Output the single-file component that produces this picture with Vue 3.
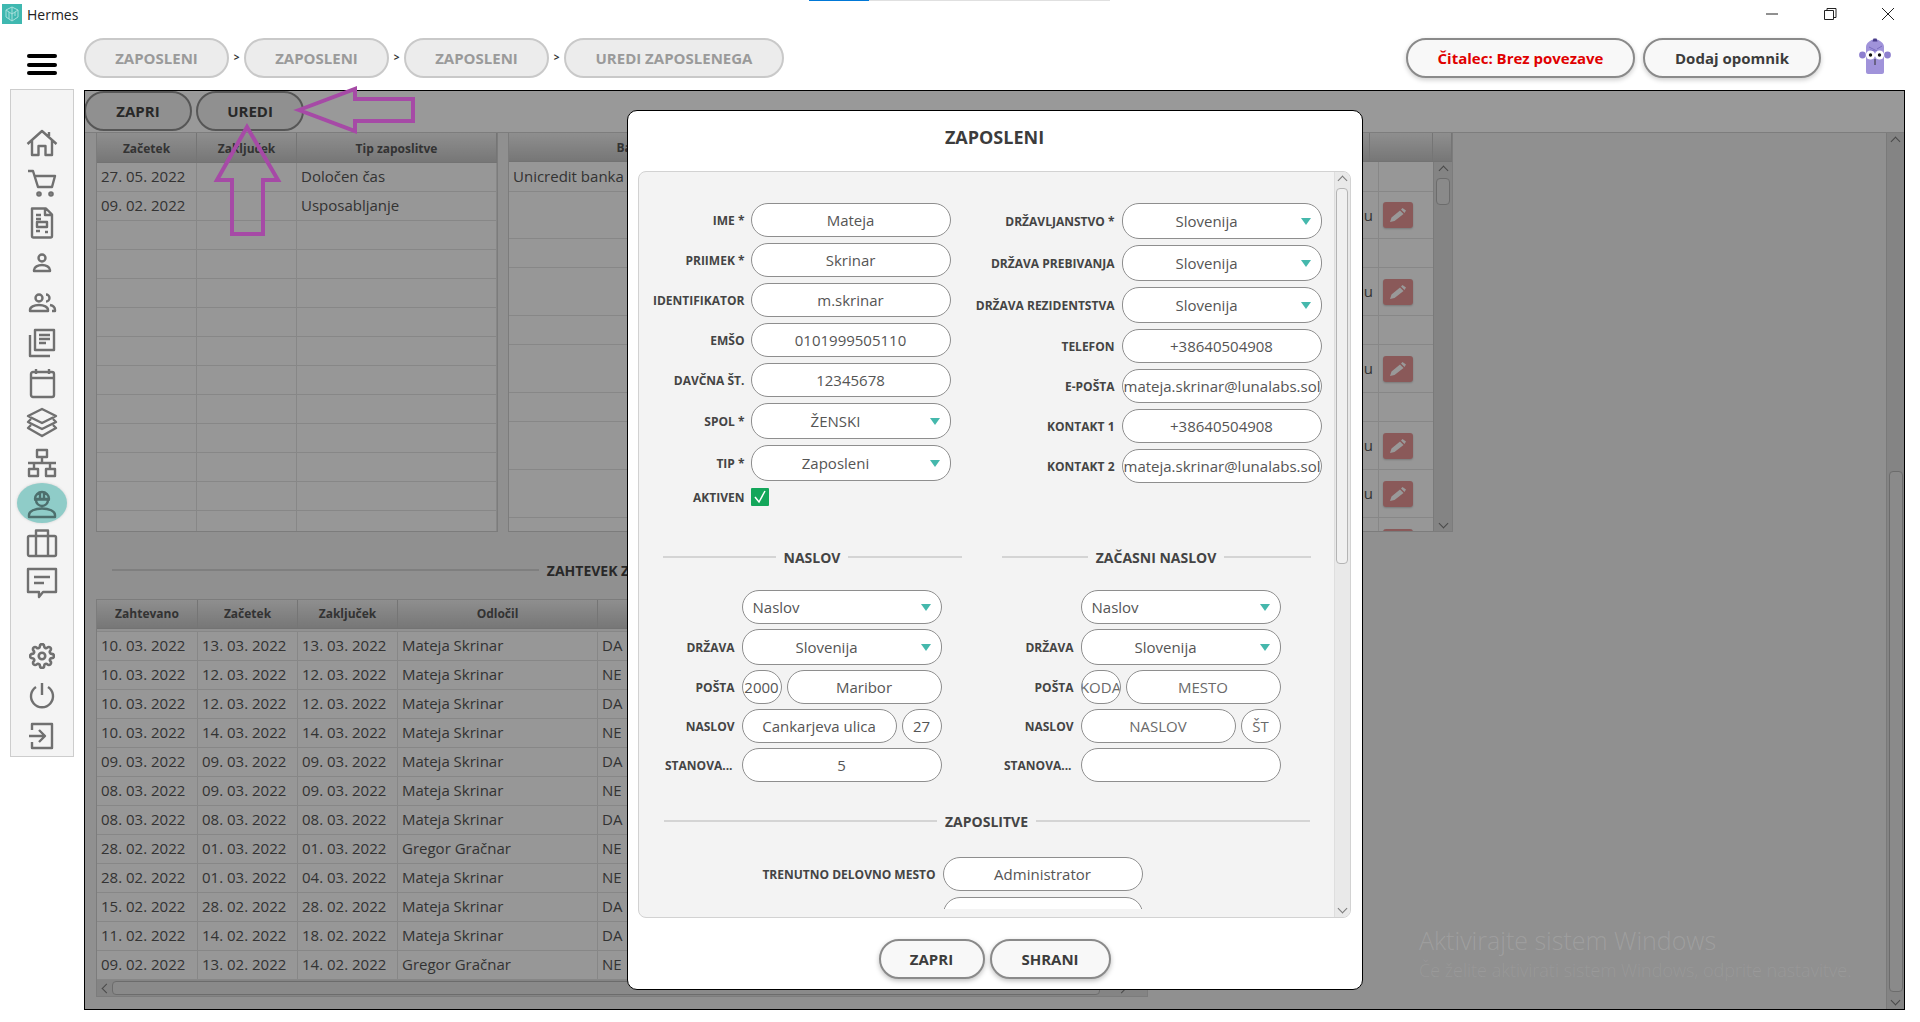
<script setup>
const crumbs = ['ZAPOSLENI', 'ZAPOSLENI', 'ZAPOSLENI', 'UREDI ZAPOSLENEGA']

const contracts = [
  ['27. 05. 2022', '', 'Določen čas'],
  ['09. 02. 2022', '', 'Usposabljanje'],
  ...Array.from({ length: 11 }, () => ['', '', ''])
]

// visina vrstic v desni tabeli, edit = gumb za urejanje
const bankRows = [
  { h: 30, bank: 'Unicredit banka' },
  { h: 47, edit: true },
  { h: 29 },
  { h: 48, edit: true },
  { h: 29 },
  { h: 48, edit: true },
  { h: 29 },
  { h: 48, edit: true },
  { h: 48, edit: true },
  { h: 48, edit: true }
]

const requests = [
  ['10. 03. 2022', '13. 03. 2022', '13. 03. 2022', 'Mateja Skrinar', 'DA'],
  ['10. 03. 2022', '12. 03. 2022', '12. 03. 2022', 'Mateja Skrinar', 'NE'],
  ['10. 03. 2022', '12. 03. 2022', '12. 03. 2022', 'Mateja Skrinar', 'DA'],
  ['10. 03. 2022', '14. 03. 2022', '14. 03. 2022', 'Mateja Skrinar', 'NE'],
  ['09. 03. 2022', '09. 03. 2022', '09. 03. 2022', 'Mateja Skrinar', 'DA'],
  ['08. 03. 2022', '09. 03. 2022', '09. 03. 2022', 'Mateja Skrinar', 'NE'],
  ['08. 03. 2022', '08. 03. 2022', '08. 03. 2022', 'Mateja Skrinar', 'DA'],
  ['28. 02. 2022', '01. 03. 2022', '01. 03. 2022', 'Gregor Gračnar', 'NE'],
  ['28. 02. 2022', '01. 03. 2022', '04. 03. 2022', 'Mateja Skrinar', 'NE'],
  ['15. 02. 2022', '28. 02. 2022', '28. 02. 2022', 'Mateja Skrinar', 'DA'],
  ['11. 02. 2022', '14. 02. 2022', '18. 02. 2022', 'Mateja Skrinar', 'DA'],
  ['09. 02. 2022', '13. 02. 2022', '14. 02. 2022', 'Gregor Gračnar', 'NE']
]

const formLeft = [
  { label: 'IME *', value: 'Mateja' },
  { label: 'PRIIMEK *', value: 'Skrinar' },
  { label: 'IDENTIFIKATOR', value: 'm.skrinar' },
  { label: 'EMŠO', value: '0101999505110' },
  { label: 'DAVČNA ŠT.', value: '12345678' },
  { label: 'SPOL *', value: 'ŽENSKI', select: true },
  { label: 'TIP *', value: 'Zaposleni', select: true }
]

const formRight = [
  { label: 'DRŽAVLJANSTVO *', value: 'Slovenija', select: true },
  { label: 'DRŽAVA PREBIVANJA', value: 'Slovenija', select: true },
  { label: 'DRŽAVA REZIDENTSTVA', value: 'Slovenija', select: true },
  { label: 'TELEFON', value: '+38640504908' },
  { label: 'E-POŠTA', value: 'mateja.skrinar@lunalabs.sol', long: true },
  { label: 'KONTAKT 1', value: '+38640504908' },
  { label: 'KONTAKT 2', value: 'mateja.skrinar@lunalabs.sol', long: true }
]

const addresses = [
  { title: 'NASLOV', code: '2000', city: 'Maribor', street: 'Cankarjeva ulica', no: '27', flat: '5', empty: false },
  { title: 'ZAČASNI NASLOV', code: 'KODA', city: 'MESTO', street: 'NASLOV', no: 'ŠT', flat: '', empty: true }
]
</script>

<template>
  <div class="app">
    <div class="titlebar">
      <div class="progress"><span></span></div>
      <svg class="logo" width="20" height="20" viewBox="0 0 20 20">
        <rect width="20" height="20" fill="#3fb8b0" />
        <path d="M10 3l6 3v7l-6 4-6-4V6zM10 3v14M4 6l6 4 6-4M7 8v7M13 8v4" fill="none" stroke="#a9e0dc" stroke-width="1" />
      </svg>
      <span class="app-name">Hermes</span>
      <div class="win-controls">
        <svg width="14" height="14" viewBox="0 0 14 14"><path d="M1 7h12" stroke="#222" fill="none" /></svg>
        <svg width="14" height="14" viewBox="0 0 14 14"><path d="M1.5 3.5h9v9h-9zM4 3.5V1.5h9v9h-2.5" stroke="#222" fill="none" /></svg>
        <svg width="14" height="14" viewBox="0 0 14 14"><path d="M1 1l12 12M13 1L1 13" stroke="#222" fill="none" /></svg>
      </div>
    </div>

    <div class="topbar">
      <div class="burger-wrap">
        <div class="burger"><i></i><i></i><i></i></div>
      </div>
      <template v-for="(c, i) in crumbs" :key="i">
        <span v-if="i" class="crumb-sep">&gt;</span>
        <div class="crumb" :class="{ wide: i === 3 }">{{ c }}</div>
      </template>
      <div class="top-right">
        <button class="top-btn reader">Čitalec: Brez povezave</button>
        <button class="top-btn reminder">Dodaj opomnik</button>
        <svg class="mascot" width="32" height="40" viewBox="0 0 32 40">
          <circle cx="3.500" cy="19" r="3.400" fill="#8d7fcf" />
          <circle cx="28.500" cy="19" r="3.400" fill="#8d7fcf" />
          <path d="M7 36V11c0-4 4-7 9-8 5 1 9 4 9 8v25c0 1-1 2-2 2H9c-1 0-2-1-2-2z" fill="#a093da" />
          <path d="M13.500 5.500l1-3h3l1 3z" fill="#4a3d8a" />
          <path d="M10 11l8 4M23 10l-5 3M11 14l5 1" stroke="#7a6cc0" fill="none" />
          <circle cx="11.500" cy="19" r="4.600" fill="#fff" />
          <circle cx="20.500" cy="19" r="4.600" fill="#fff" />
          <circle cx="11.500" cy="19" r="1.700" fill="#111" />
          <circle cx="20.500" cy="19" r="1.700" fill="#111" />
          <path d="M16 23v6" stroke="#333" fill="none" />
        </svg>
      </div>
    </div>

    <div class="workspace">
      <nav class="sidebar">
        <div class="nav-item">
          <svg width="32" height="32" viewBox="0 0 32 32"><path d="M1.5 17L16 4l14.500 13M6 13.500V28h6.500v-9h7v9H26V13.500M23 9V5" /></svg>
        </div>
        <div class="nav-item">
          <svg width="32" height="32" viewBox="0 0 32 32"><path d="M2 4h5l5 16h14l3-11H9" /><circle cx="13" cy="27" r="1.600" /><circle cx="25" cy="27" r="1.600" /></svg>
        </div>
        <div class="nav-item">
          <svg width="32" height="32" viewBox="0 0 32 32"><path d="M6 1.500h14l6 6V29a1.500 1.500 0 0 1-1.500 1.500h-17A1.500 1.500 0 0 1 6 29zM19 2v6h7M10 8h5M10 12h5M11 15h10v5H11zM10 24h4M19 25h3" /></svg>
        </div>
        <div class="nav-item">
          <svg width="32" height="32" viewBox="0 0 32 32"><circle cx="16" cy="11" r="3.500" /><path d="M8 24v-1c0-3 4-5 8-5s8 2 8 5v1z" /></svg>
        </div>
        <div class="nav-item">
          <svg width="32" height="32" viewBox="0 0 32 32"><circle cx="13" cy="11" r="3.500" /><path d="M4 24v-1c0-3 4-5 9-5s9 2 9 5v1zM20 7.500a3.500 3.500 0 0 1 0 7M24 18c3 .6 5 2.500 5 5v1h-3" /></svg>
        </div>
        <div class="nav-item">
          <svg width="32" height="32" viewBox="0 0 32 32"><path d="M9 3h19v20H9zM13 8h11M13 12h11M13 16h7M4 8v21h20" /></svg>
        </div>
        <div class="nav-item">
          <svg width="32" height="32" viewBox="0 0 32 32"><rect x="5" y="5" width="23" height="25" rx="2" /><path d="M5 11h23M10 2v5M23 2v5" /></svg>
        </div>
        <div class="nav-item">
          <svg width="32" height="32" viewBox="0 0 32 32"><path d="M16 2l14 7-14 7-14-7zM5 12l-3 3 14 7 14-7-3-3M5 18l-3 3 14 8 14-8-3-3" /></svg>
        </div>
        <div class="nav-item">
          <svg width="32" height="32" viewBox="0 0 32 32"><path d="M11 3h10v7H11zM16 10v6M2 16h28M8 16v5M24 16v5M3 22h9v7H3zM20 22h9v7h-9z" /></svg>
        </div>
        <div class="nav-item active">
          <svg width="32" height="32" viewBox="0 0 32 32"><path d="M9 12a7 7 0 0 1 14 0zM8 12.500h16M14 5v7M18 5v7M10 13a6 6 0 0 0 12 0M3 30v-2c0-4 6-6.500 13-6.500S29 24 29 28v2z" /></svg>
        </div>
        <div class="nav-item">
          <svg width="32" height="32" viewBox="0 0 32 32"><rect x="2" y="9" width="28" height="20" rx="1.500" /><path d="M10 9V3.500h12V9M10 9v20M22 9v20" /></svg>
        </div>
        <div class="nav-item">
          <svg width="32" height="32" viewBox="0 0 32 32"><path d="M2 2h28v23H17l-4 5v-5H2zM8 10h16M8 16h10" /></svg>
        </div>
        <div class="nav-item lower">
          <svg width="26" height="26" viewBox="0 0 24 24"><circle cx="12" cy="12" r="3" /><path d="M19.4 15a1.65 1.65 0 0 0 .33 1.82l.06.06a2 2 0 0 1 0 2.83 2 2 0 0 1-2.83 0l-.06-.06a1.65 1.65 0 0 0-1.82-.33 1.65 1.65 0 0 0-1 1.51V21a2 2 0 0 1-2 2 2 2 0 0 1-2-2v-.09A1.65 1.65 0 0 0 9 19.4a1.65 1.65 0 0 0-1.82.33l-.06.06a2 2 0 0 1-2.83 0 2 2 0 0 1 0-2.83l.06-.06a1.65 1.65 0 0 0 .33-1.82 1.65 1.65 0 0 0-1.51-1H3a2 2 0 0 1-2-2 2 2 0 0 1 2-2h.09A1.65 1.65 0 0 0 4.6 9a1.65 1.65 0 0 0-.33-1.82l-.06-.06a2 2 0 0 1 0-2.83 2 2 0 0 1 2.83 0l.06.06a1.65 1.65 0 0 0 1.82.33H9a1.65 1.65 0 0 0 1-1.51V3a2 2 0 0 1 2-2 2 2 0 0 1 2 2v.09a1.65 1.65 0 0 0 1 1.51 1.65 1.65 0 0 0 1.82-.33l.06-.06a2 2 0 0 1 2.83 0 2 2 0 0 1 0 2.83l-.06.06a1.65 1.65 0 0 0-.33 1.82V9a1.65 1.65 0 0 0 1.51 1H21a2 2 0 0 1 2 2 2 2 0 0 1-2 2h-.09a1.65 1.65 0 0 0-1.51 1z" /></svg>
        </div>
        <div class="nav-item">
          <svg width="32" height="32" viewBox="0 0 32 32"><path d="M10 7a11 11 0 1 0 12 0M16 3v12" /></svg>
        </div>
        <div class="nav-item">
          <svg width="32" height="32" viewBox="0 0 32 32"><path d="M6 10V4h20v24H6v-6M3 16h15M13 10l6 6-6 6" /></svg>
        </div>
      </nav>

      <main class="frame">
        <div class="toolbar">
          <button class="tool-btn">ZAPRI</button>
          <button class="tool-btn">UREDI</button>
        </div>

        <div class="frame-body">
          <div class="page">
            <div class="top-tables">
              <div class="tbl tbl-contracts">
                <div class="row head">
                  <div>Začetek</div>
                  <div>Zaključek</div>
                  <div>Tip zaposlitve</div>
                </div>
                <div v-for="(r, i) in contracts" :key="i" class="row">
                  <div v-for="(c, j) in r" :key="j">{{ c }}</div>
                </div>
              </div>

              <div class="tbl tbl-bank">
                <div class="row head">
                  <div>Banka</div>
                  <div></div>
                  <div></div>
                  <div></div>
                </div>
                <div class="bank-body">
                  <div class="bank-rows">
                    <div v-for="(r, i) in bankRows" :key="i" class="row" :style="{ height: r.h + 'px' }">
                      <div>{{ r.bank }}</div>
                      <div></div>
                      <div class="end-text">{{ r.edit ? 'u' : '' }}</div>
                      <div class="action">
                        <span v-if="r.edit" class="edit-btn">
                          <svg width="18" height="16" viewBox="0 0 18 16"><path d="M1 15l1.500-4.500L11 3.500 14.500 7 5.500 14zM12 2.500L13.500 1 17 3.500 15.500 6z" fill="#fff" /></svg>
                        </span>
                      </div>
                    </div>
                  </div>
                  <div class="vbar small">
                    <i class="chev up"></i>
                    <span class="thumb short"></span>
                    <i class="chev down"></i>
                  </div>
                </div>
              </div>
            </div>

            <div class="section-title wide-title">
              <span>ZAHTEVEK ZA DOPUST</span>
            </div>

            <div class="tbl tbl-requests">
              <div class="row head">
                <div>Zahtevano</div>
                <div>Začetek</div>
                <div>Zaključek</div>
                <div>Odločil</div>
                <div></div>
              </div>
              <div class="head-gap"></div>
              <div v-for="(r, i) in requests" :key="i" class="row">
                <div v-for="(c, j) in r" :key="j">{{ c }}</div>
              </div>
              <div class="hbar">
                <i class="chev left"></i>
                <span class="thumb long"></span>
                <i class="chev right"></i>
              </div>
            </div>
          </div>

          <div class="vbar main-bar">
            <i class="chev up"></i>
            <span class="thumb tall"></span>
            <i class="chev down"></i>
          </div>
        </div>

        <div class="overlay">
          <div class="modal">
            <h2 class="modal-title">ZAPOSLENI</h2>

            <div class="panel">
              <div class="panel-body">
                <div class="panel-scroll">
                  <div class="top-form">
                    <div class="col-left">
                      <div v-for="f in formLeft" :key="f.label" class="form-row">
                        <label>{{ f.label }}</label>
                        <div v-if="f.select" class="field select"><span>{{ f.value }}</span><i class="arrow"></i></div>
                        <div v-else class="field"><span>{{ f.value }}</span></div>
                      </div>
                      <div class="form-row check-row">
                        <label>AKTIVEN</label>
                        <span class="check">
                          <svg width="18" height="18" viewBox="0 0 18 18"><path d="M4 9l4 5 6-11" fill="none" stroke="#fff" stroke-width="1.500" /></svg>
                        </span>
                      </div>
                    </div>
                    <div class="col-right">
                      <div v-for="f in formRight" :key="f.label" class="form-row">
                        <label>{{ f.label }}</label>
                        <div v-if="f.select" class="field select"><span>{{ f.value }}</span><i class="arrow"></i></div>
                        <div v-else class="field" :class="{ long: f.long }"><span>{{ f.value }}</span></div>
                      </div>
                    </div>
                  </div>

                  <div class="addr-row">
                    <div v-for="a in addresses" :key="a.title" class="addr-col">
                      <div class="section-title"><span>{{ a.title }}</span></div>
                      <div class="addr-fields">
                        <div class="form-row">
                          <label></label>
                          <div class="field select left-text"><span>Naslov</span><i class="arrow"></i></div>
                        </div>
                        <div class="form-row">
                          <label>DRŽAVA</label>
                          <div class="field select"><span>Slovenija</span><i class="arrow"></i></div>
                        </div>
                        <div class="form-row">
                          <label>POŠTA</label>
                          <div class="field-pair">
                            <div class="field tiny" :class="{ hint: a.empty }"><span>{{ a.code }}</span></div>
                            <div class="field" :class="{ hint: a.empty }"><span>{{ a.city }}</span></div>
                          </div>
                        </div>
                        <div class="form-row">
                          <label>NASLOV</label>
                          <div class="field-pair">
                            <div class="field" :class="{ hint: a.empty }"><span>{{ a.street }}</span></div>
                            <div class="field tiny" :class="{ hint: a.empty }"><span>{{ a.no }}</span></div>
                          </div>
                        </div>
                        <div class="form-row">
                          <label class="cut">STANOVA...</label>
                          <div class="field"><span>{{ a.flat }}</span></div>
                        </div>
                      </div>
                    </div>
                  </div>

                  <div class="jobs">
                    <div class="section-title"><span>ZAPOSLITVE</span></div>
                    <div class="job-fields">
                      <div class="form-row">
                        <label>TRENUTNO DELOVNO MESTO</label>
                        <div class="field"><span>Administrator</span></div>
                      </div>
                      <div class="form-row">
                        <label></label>
                        <div class="field"></div>
                      </div>
                    </div>
                  </div>
                </div>
              </div>
              <div class="vbar panel-bar">
                <i class="chev up"></i>
                <span class="thumb modal-thumb"></span>
                <i class="chev down"></i>
              </div>
            </div>

            <div class="modal-actions">
              <button class="modal-btn close">ZAPRI</button>
              <button class="modal-btn save">SHRANI</button>
            </div>
          </div>
        </div>
      </main>
    </div>

    <div class="watermark">
      <div class="wm-big">Aktivirajte sistem Windows</div>
      <div class="wm-small">Če želite aktivirati sistem Windows, odprite nastavitve.</div>
    </div>

    <!-- puscici iz navodil, narisani cez zaslon -->
    <svg class="annotations" width="1920" height="1022" viewBox="0 0 1920 1022">
      <path d="M299 110L355 89v10h58v22h-58v10z" />
      <path d="M247 127l31 53h-15v54h-31v-54h-15z" />
    </svg>
  </div>
</template>

<style>
html, body {
  margin: 0;
  background: #fff;
}
</style>

<style scoped>
* {
  box-sizing: border-box;
}

.app {
  position: relative;
  width: 1920px;
  height: 1022px;
  overflow: hidden;
  background: #fff;
  font-family: "Open Sans", "Noto Sans", sans-serif;
  color: #444;
}

/* naslovna vrstica */
.titlebar {
  position: relative;
  height: 28px;
  display: flex;
  align-items: center;
  padding-left: 2px;
}

.progress {
  position: absolute;
  top: 0;
  left: 809px;
  width: 301px;
  height: 1px;
  background: #e0e0e0;
}

.progress span {
  display: block;
  width: 60px;
  height: 1px;
  background: #0078d7;
}

.app-name {
  margin-left: 5px;
  font-size: 14px;
  color: #222;
}

.win-controls {
  margin-left: auto;
  margin-right: 25px;
  display: flex;
  gap: 44px;
}

/* zgornja vrstica */
.topbar {
  height: 62px;
  display: flex;
  align-items: flex-start;
  padding-top: 10px;
}

.burger-wrap {
  width: 84px;
  padding: 16px 0 0 27px;
}

.burger {
  width: 30px;
}

.burger i {
  display: block;
  height: 4px;
  margin-bottom: 4.500px;
  background: #000;
  border-radius: 2px;
}

.crumb {
  width: 145px;
  height: 40px;
  display: flex;
  align-items: center;
  justify-content: center;
  border: 2px solid #c9c9c9;
  border-radius: 20px;
  background: #ececec;
  color: #9a9a9a;
  font-size: 15px;
  font-weight: 700;
}

.crumb.wide {
  width: 220px;
}

.crumb-sep {
  width: 15px;
  height: 40px;
  line-height: 38px;
  text-align: center;
  font-size: 10px;
  font-weight: 700;
  color: #333;
}

.top-right {
  margin-left: auto;
  display: flex;
  align-items: flex-start;
  padding-right: 29px;
}

.top-btn {
  height: 40px;
  border: 2px solid #8a8a8a;
  border-radius: 20px;
  background: #f8f8f8;
  box-shadow: 0 2px 5px rgba(0, 0, 0, 0.2);
  font-family: inherit;
  font-size: 15px;
  font-weight: 700;
}

.reader {
  width: 229px;
  color: #e00000;
}

.reminder {
  width: 178px;
  margin-left: 8px;
  color: #3c3c3c;
}

.mascot {
  margin-left: 38px;
  margin-top: -2px;
}

/* stranski meni */
.workspace {
  display: flex;
  padding-left: 10px;
}

.sidebar {
  width: 64px;
  height: 668px;
  margin-top: -1px;
  margin-right: 10px;
  padding-top: 33px;
  display: flex;
  flex-direction: column;
  align-items: center;
  border: 1px solid #cdcdcd;
  background: #f4f4f4;
  flex: none;
}

.nav-item {
  width: 50px;
  height: 40px;
  flex: none;
  display: flex;
  align-items: center;
  justify-content: center;
}

.nav-item.active {
  background: #8fccc8;
  border-radius: 25px / 20px;
  box-shadow: 0 0 3px rgba(0, 0, 0, 0.15);
}

.nav-item.lower {
  margin-top: 33px;
}

.nav-item svg {
  fill: none;
  stroke: #707070;
  stroke-width: 2.400;
  stroke-linejoin: round;
}

.nav-item.active svg {
  stroke: #4d6f6d;
}

/* glavni okvir */
.frame {
  position: relative;
  width: 1821px;
  height: 920px;
  border: 1px solid #000;
  overflow: hidden;
  background: #f0f0f0;
}

.toolbar {
  height: 42px;
  display: flex;
  gap: 4px;
  margin-left: -1px;
  background: #fff;
  border-bottom: 1px solid #d0d0d0;
}

.tool-btn {
  width: 108px;
  height: 40px;
  border: 2px solid #909090;
  border-radius: 20px;
  background: #f0f0f0;
  font-family: inherit;
  font-size: 15px;
  font-weight: 700;
  color: #444;
}

.frame-body {
  display: flex;
  height: 876px;
}

.page {
  flex: 1;
  padding-left: 11px;
}

.top-tables {
  display: flex;
  gap: 10px;
}

.tbl {
  border: 1px solid #cfcfcf;
  border-top: none;
  background: #fcfcfc;
  overflow: hidden;
  font-size: 15px;
  color: #555;
}

.row {
  display: grid;
  height: 29px;
  border-bottom: 1px solid #e2e2e2;
}

.row > div {
  padding: 0 0 0 4px;
  line-height: 27px;
  white-space: nowrap;
  overflow: hidden;
  border-right: 1px solid #e2e2e2;
}

.row.head {
  height: 29px;
  border-bottom: 1px solid #c0c0c0;
  background: linear-gradient(#eeeeee, #c6c6c6);
}

.row.head > div {
  padding: 0;
  text-align: center;
  font-size: 12px;
  font-weight: 700;
  line-height: 28px;
  color: #555;
  border-right: 1px solid #c4c4c4;
}

.tbl-contracts {
  width: 402px;
  height: 399px;
}

.tbl-contracts .row {
  grid-template-columns: 100px 100px 1fr;
}

.tbl-contracts .row.head {
  height: 30px;
}

.tbl-contracts .row.head > div {
  line-height: 31px;
}

.tbl-bank {
  width: 945px;
  height: 399px;
}

.tbl-bank .row.head {
  grid-template-columns: 254px 607px 1fr 19px;
}

.tbl-bank .row.head > div {
  line-height: 30px;
}

.bank-body {
  display: flex;
  height: 370px;
}

.bank-rows {
  flex: 1;
  overflow: hidden;
}

.tbl-bank .bank-rows .row {
  grid-template-columns: 261px 343px 266px 54px;
}

.bank-rows .row > div {
  display: flex;
  align-items: center;
}

.bank-rows .row > .end-text {
  justify-content: flex-end;
  padding-right: 5px;
}

.row > .action {
  padding-left: 4px;
  border-right: none;
}

.edit-btn {
  width: 30px;
  height: 26px;
  display: flex;
  align-items: center;
  justify-content: center;
  border-radius: 3px;
  background: #e79595;
  box-shadow: 0 1px 2px rgba(0, 0, 0, 0.2);
}

.section-title {
  display: flex;
  align-items: center;
  gap: 8px;
  height: 20px;
  font-size: 14px;
  font-weight: 700;
  color: #444;
}

.section-title::before,
.section-title::after {
  content: "";
  flex: 1;
  height: 1.500px;
  background: #d4d4d4;
}

.wide-title {
  width: 1022px;
  margin: 28px 0 19px 16px;
}

.tbl-requests {
  width: 1052px;
  height: 398px;
  border-top: 1px solid #cfcfcf;
}

.tbl-requests .row {
  grid-template-columns: 101px 100px 100px 200px 1fr;
}

.head-gap {
  height: 3px;
  background: #f4f4f4;
  border-bottom: 1px solid #e2e2e2;
}

/* drsniki */
.vbar {
  flex: none;
  position: relative;
  display: flex;
  flex-direction: column;
  align-items: center;
  background: #dcdcdc;
  border-left: 1px solid #cbcbcb;
}

.vbar.small {
  width: 19px;
  padding-top: 16px;
}

.main-bar {
  width: 18px;
  padding-top: 338px;
}

.panel-bar {
  width: 16px;
  padding-top: 16px;
  background: #e9e9e9;
  border-left-color: #dedede;
}

.thumb {
  display: block;
  border: 1px solid #b4b4b4;
  border-radius: 4px;
  background: #e6e6e6;
}

.thumb.short {
  width: 14px;
  height: 27px;
}

.thumb.tall {
  width: 14px;
  height: 521px;
}

.thumb.modal-thumb {
  width: 12px;
  height: 376px;
  background: #f0f0f0;
}

.hbar {
  position: relative;
  height: 17px;
  padding: 1px 0 0 15px;
  background: #dcdcdc;
}

.thumb.long {
  width: 988px;
  height: 14px;
}

.chev {
  position: absolute;
  width: 7px;
  height: 7px;
  border-top: 1.500px solid #7a7a7a;
  border-left: 1.500px solid #7a7a7a;
}

.chev.up {
  top: 5px;
  left: calc(50% - 3.500px);
  transform: rotate(45deg);
}

.chev.down {
  bottom: 5px;
  left: calc(50% - 3.500px);
  transform: rotate(225deg);
}

.chev.left {
  top: 5px;
  left: 6px;
  transform: rotate(-45deg);
}

.chev.right {
  top: 5px;
  right: 22px;
  transform: rotate(135deg);
}

/* modalno okno */
.overlay {
  position: absolute;
  inset: 0;
  display: flex;
  align-items: center;
  justify-content: center;
  background: rgba(0, 0, 0, 0.4);
}

.modal {
  width: 736px;
  height: 880px;
  padding: 0 10px;
  border: 1px solid #000;
  border-radius: 10px;
  background: #fff;
  color: #444;
}

.modal-title {
  height: 60px;
  margin: 0;
  padding-top: 14px;
  text-align: center;
  font-size: 18px;
  line-height: 24px;
  font-weight: 700;
  color: #3c3c3c;
}

.panel {
  display: flex;
  width: 713px;
  height: 747px;
  border: 1px solid #d2d2d2;
  border-radius: 8px;
  background: #f3f3f3;
  overflow: hidden;
}

.panel-body {
  flex: 1;
  min-width: 0;
}

.panel-scroll {
  height: 737px;
  overflow: hidden;
}

.top-form {
  display: flex;
  height: 335px;
  padding-top: 31px;
}

.col-left,
.col-right {
  display: flex;
  flex-direction: column;
  gap: 6px;
}

.form-row {
  display: flex;
  align-items: center;
  flex: none;
}

.form-row label {
  flex: none;
  text-align: right;
  font-size: 12px;
  font-weight: 700;
  white-space: nowrap;
  color: #444;
}

.col-left label {
  width: 106px;
  margin-right: 6px;
}

.col-right {
  margin-left: 19px;
}

.col-right label {
  width: 145px;
  margin-right: 7px;
}

.field {
  flex: none;
  position: relative;
  width: 200px;
  height: 34px;
  display: flex;
  align-items: center;
  justify-content: center;
  border: 1px solid #8e8e8e;
  border-radius: 17px;
  background: #fff;
  font-size: 15px;
  white-space: nowrap;
  overflow: hidden;
  color: #555;
}

.field.select {
  height: 36px;
  padding-right: 30px;
}

.field.left-text {
  height: 34px;
  justify-content: flex-start;
  padding-left: 10px;
}

.field.long {
  justify-content: flex-start;
  padding-left: 1px;
}

.field.hint {
  color: #6a6a6a;
}

.arrow {
  position: absolute;
  right: 10px;
  top: calc(50% - 3px);
  width: 0;
  height: 0;
  border-left: 5px solid transparent;
  border-right: 5px solid transparent;
  border-top: 7px solid #45b8ac;
}

.check-row {
  margin-top: 1px;
}

.check {
  width: 18px;
  height: 18px;
  border-radius: 1px;
  background: #13a65a;
}

.check svg {
  display: block;
}

.addr-row {
  display: flex;
  gap: 40px;
  margin-left: 24px;
  margin-top: 40px;
}

.addr-col {
  width: 299px;
}

.addr-col + .addr-col {
  width: 309px;
}

.addr-fields {
  display: flex;
  flex-direction: column;
  gap: 5px;
  margin-top: 23px;
}

.addr-fields label {
  width: 72px;
  margin-right: 7px;
}

.addr-fields .cut {
  padding-right: 2px;
}

.field-pair {
  width: 200px;
  display: flex;
  gap: 5px;
}

.field-pair .field {
  flex: 1;
  min-width: 0;
}

.field-pair .field.tiny {
  flex: none;
  width: 40px;
}

.jobs {
  width: 646px;
  margin: 29px 0 0 25px;
}

.job-fields {
  display: flex;
  flex-direction: column;
  gap: 6px;
  margin-top: 26px;
}

.job-fields label {
  width: 272px;
  margin-right: 7px;
}

.modal-actions {
  display: flex;
  justify-content: center;
  gap: 5px;
  margin-top: 21px;
}

.modal-btn {
  height: 40px;
  border: 2px solid #8a8a8a;
  border-radius: 20px;
  background: #f8f8f8;
  box-shadow: 0 2px 5px rgba(0, 0, 0, 0.25);
  font-family: inherit;
  font-size: 15px;
  font-weight: 700;
  color: #3c3c3c;
}

.modal-btn.close {
  width: 106px;
}

.modal-btn.save {
  width: 121px;
}

.watermark {
  position: absolute;
  left: 1419px;
  top: 923px;
  font-weight: 300;
  white-space: nowrap;
}

.wm-big {
  font-size: 25px;
  line-height: 34px;
  color: rgba(255, 255, 255, 0.14);
}

.wm-small {
  font-size: 18px;
  line-height: 26px;
  color: rgba(255, 255, 255, 0.09);
}

.annotations {
  position: absolute;
  left: 0;
  top: 0;
  pointer-events: none;
}

.annotations path {
  fill: none;
  stroke: #a64aa6;
  stroke-width: 4;
  stroke-linejoin: miter;
}
</style>
